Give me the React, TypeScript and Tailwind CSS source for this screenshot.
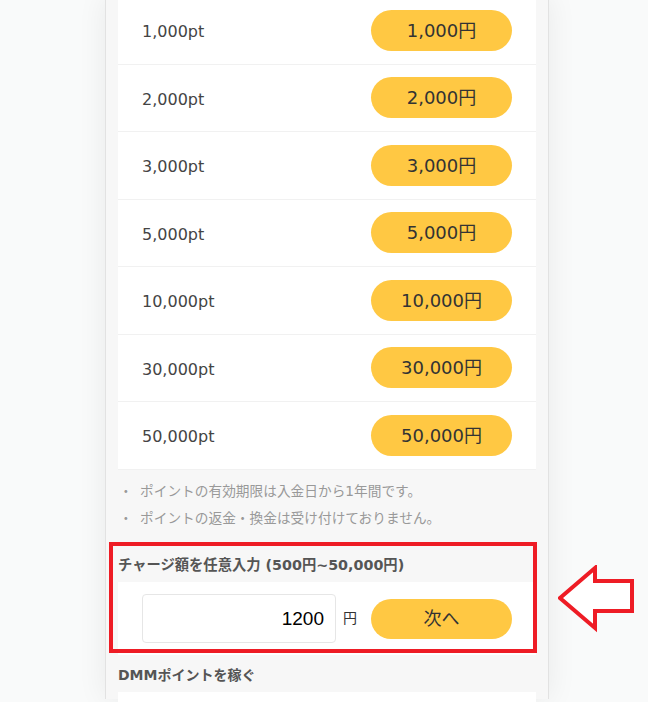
import React from "react";

const amounts = ["1,000", "2,000", "3,000", "5,000", "10,000", "30,000", "50,000"];

const notes = [
  "ポイントの有効期限は入金日から1年間です。",
  "ポイントの返金・換金は受け付けておりません。",
];

const FONT = { fontFamily: '"DejaVu Sans", "Noto Sans CJK JP", sans-serif' };

const PointRow = ({ value }: { value: string }) => (
  <div className="box-border flex h-[67.5px] items-center justify-between border-b border-[#f1f1f1] bg-white pl-6 pr-6">
    <span className="pt-[4px] text-[16px] text-[#444]">{value}pt</span>
    <button className="h-[41px] w-[141px] rounded-full bg-[#ffc843] text-[18px] text-[#333]">
      {value}円
    </button>
  </div>
);

const LeftArrow = () => (
  <svg width="80" height="70" viewBox="0 0 80 70" className="block">
    <path
      d="M2 33 L37 3 L37 16 L74 16 L74 46 L37 46 L37 63 Z"
      fill="#fff"
      stroke="#ee1c25"
      strokeWidth="4"
      strokeLinejoin="miter"
    />
  </svg>
);

export default function App() {
  return (
    <div className="relative h-[702px] w-full overflow-hidden bg-[#f9fafa]" style={FONT}>
      <div className="ml-[105px] box-border h-full w-[444px] border-x border-[#e2e2e2] bg-[#f7f7f7] px-3 shadow-[0_0_28px_rgba(0,0,0,0.07)]">
        <div className="-mt-[3px]">
          {amounts.map((a) => (
            <PointRow key={a} value={a} />
          ))}
        </div>

        <ul className="pt-2">
          {notes.map((n) => (
            <li key={n} className="flex text-[13.7px] leading-[27px] text-[#999]">
              <span className="w-[22px] pl-[1px]">・</span>
              <span>{n}</span>
            </li>
          ))}
        </ul>

        <div className="relative">
          <h3 className="pt-[23.5px] text-[14.3px] font-bold leading-[20px] text-[#555]">
            チャージ額を任意入力 (500円~50,000円)
          </h3>
          <div className="mt-[7px] flex h-[73px] items-center bg-white pl-6 pr-6">
            <div className="flex h-[49px] w-[194px] items-center justify-end rounded-[4px] border border-[#e6e6e6] pr-[11px]">
              <span
                className="pt-[2px] text-[19px] text-black"
                style={{ fontFamily: '"Liberation Sans", Arial, sans-serif' }}
              >
                1200
              </span>
            </div>
            <span className="ml-[7px] text-[14px] text-[#333]">円</span>
            <button className="ml-auto h-[40px] w-[141px] rounded-full bg-[#ffc843] text-[18px] text-[#333]">
              次へ
            </button>
          </div>
          <div className="pointer-events-none absolute -left-[9px] top-[10.5px] -right-[1px] bottom-[2px] border-[4.5px] border-[#ee1c25]" />
        </div>

        <h3 className="mt-[10px] text-[14px] font-bold leading-[20px] text-[#555]">DMMポイントを稼ぐ</h3>
        <div className="mt-[7px] h-[40px] bg-white" />
      </div>

      <div className="absolute left-[558px] top-[565px]">
        <LeftArrow />
      </div>
    </div>
  );
}
